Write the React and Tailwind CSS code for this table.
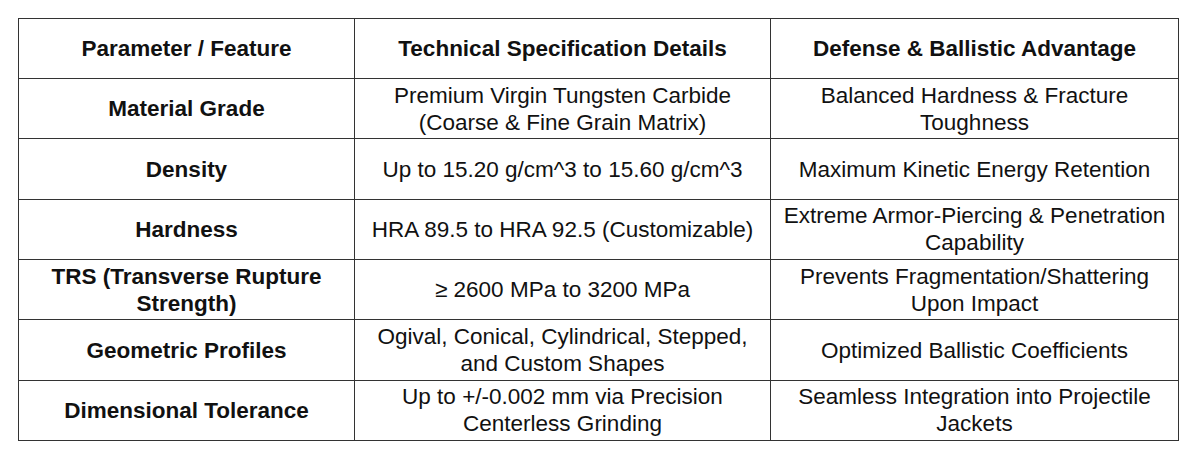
const rows = [
  {
    param: "Material Grade",
    spec: "Premium Virgin Tungsten Carbide (Coarse & Fine Grain Matrix)",
    advantage: "Balanced Hardness & Fracture Toughness",
  },
  {
    param: "Density",
    spec: "Up to 15.20 g/cm^3 to 15.60 g/cm^3",
    advantage: "Maximum Kinetic Energy Retention",
  },
  {
    param: "Hardness",
    spec: "HRA 89.5 to HRA 92.5 (Customizable)",
    advantage: "Extreme Armor-Piercing & Penetration Capability",
  },
  {
    param: "TRS (Transverse Rupture Strength)",
    spec: "≥ 2600 MPa to 3200 MPa",
    advantage: "Prevents Fragmentation/Shattering Upon Impact",
  },
  {
    param: "Geometric Profiles",
    spec: "Ogival, Conical, Cylindrical, Stepped, and Custom Shapes",
    advantage: "Optimized Ballistic Coefficients",
  },
  {
    param: "Dimensional Tolerance",
    spec: "Up to +/-0.002 mm via Precision Centerless Grinding",
    advantage: "Seamless Integration into Projectile Jackets",
  },
]

const cell = "border border-[#333] px-2 text-center align-middle"

export default function App() {
  return (
    <div className="min-h-[461px] bg-white pl-[18px] pt-[18px] font-['Liberation_Sans',Arial,sans-serif] text-[22.5px] leading-[27px] text-[#111]">
      <table className="w-[1160px] table-fixed border-collapse">
        <colgroup>
          <col className="w-[336px]" />
          <col className="w-[416px]" />
          <col className="w-[408px]" />
        </colgroup>
        <thead>
          <tr className="h-[60px]">
            <th className={`${cell} font-bold`}>Parameter / Feature</th>
            <th className={`${cell} font-bold`}>Technical Specification Details</th>
            <th className={`${cell} font-bold`}>Defense &amp; Ballistic Advantage</th>
          </tr>
        </thead>
        <tbody>
          {rows.map((r) => (
            <tr key={r.param} className="h-[60.35px]">
              <td className={`${cell} font-bold`}>{r.param}</td>
              <td className={cell}>{r.spec}</td>
              <td className={cell}>{r.advantage}</td>
            </tr>
          ))}
        </tbody>
      </table>
    </div>
  )
}
